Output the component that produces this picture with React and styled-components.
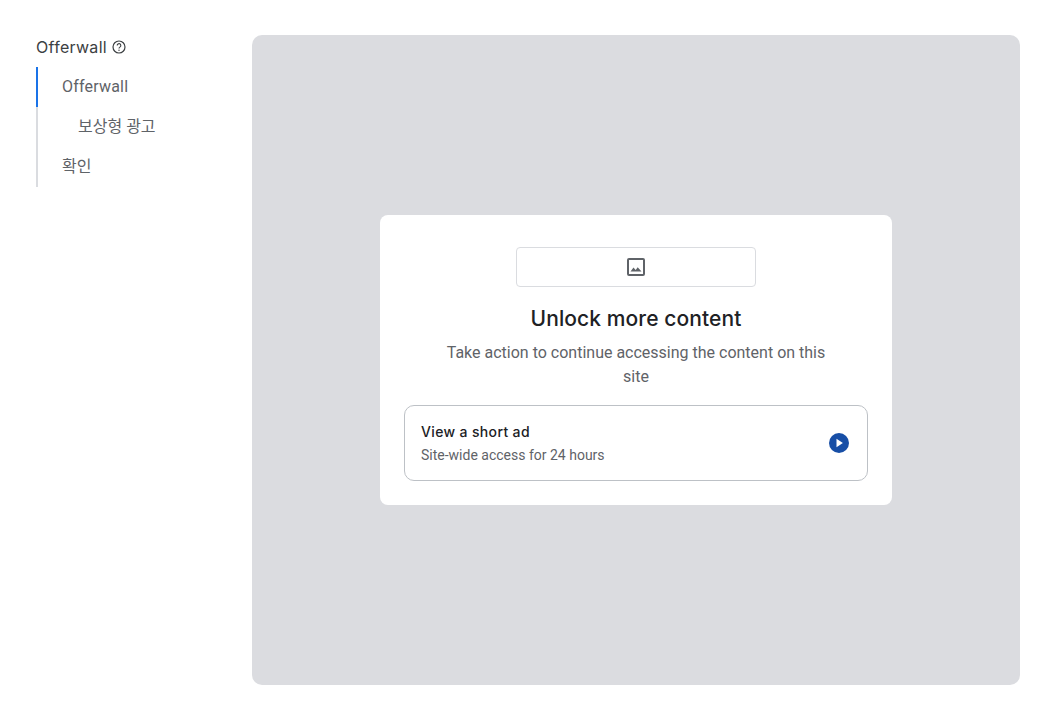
import React from "react";
import styled, { createGlobalStyle } from "styled-components";

const Global = createGlobalStyle`
  html, body { margin: 0; padding: 0; background: #fff; }
  body { font-family: Roboto, "Noto Sans CJK KR", sans-serif; overflow: hidden; }
`;
const Page = styled.div`
  display: flex;
  width: 1052px;
  height: 705px;
  box-sizing: border-box;
  padding: 35px 32px 20px 36px;
`;
const Sidebar = styled.aside`
  width: 216px;
  flex: none;
`;
const TitleRow = styled.div`
  display: flex;
  align-items: center;
  gap: 4px;
  height: 24px;
  margin-bottom: 8px;
`;
const Title = styled.span`
  font-family: "Inter", "Noto Sans CJK KR", sans-serif;
  font-size: 16px;
  letter-spacing: 0.3px;
  line-height: 24px;
  color: #3c4043;
`;
const Nav = styled.nav`
  display: flex;
  flex-direction: column;
  width: 180px;
`;
const NavItem = styled.div`
  height: 40px;
  box-sizing: border-box;
  display: flex;
  align-items: center;
  padding-left: ${(p) => (p.$sub ? 40 : 24)}px;
  padding-bottom: 1px;
  border-left: 2px solid ${(p) => (p.$active ? "#1a73e8" : "#dadce0")};
  font-size: 16px;
  letter-spacing: ${(p) => (p.$active ? 0.2 : 0)}px;
  line-height: 24px;
  color: #5f6368;
`;
const Panel = styled.main`
  flex: 1;
  height: 650px;
  background: #dbdce0;
  border-radius: 10px;
  display: flex;
  align-items: center;
  justify-content: center;
`;
const Card = styled.section`
  width: 512px;
  height: 290px;
  box-sizing: border-box;
  background: #fff;
  border-radius: 8px;
  padding: 32px 24px 24px;
  display: flex;
  flex-direction: column;
  align-items: center;
`;
const LogoBox = styled.div`
  width: 240px;
  height: 40px;
  box-sizing: border-box;
  border: 1px solid #dadce0;
  border-radius: 4px;
  display: flex;
  align-items: center;
  justify-content: center;
  color: #5f6368;
`;
const Heading = styled.h1`
  margin: 18px 0 0;
  height: 28px;
  font-family: "Inter", sans-serif;
  font-weight: 500;
  font-size: 21px;
  letter-spacing: 0.1px;
  line-height: 28px;
  color: #202124;
`;
const Desc = styled.p`
  margin: 8px 0 0;
  width: 400px;
  text-align: center;
  font-size: 16px;
  line-height: 24px;
  color: #5f6368;
`;
const Option = styled.div`
  margin-top: 16px;
  width: 464px;
  height: 76px;
  box-sizing: border-box;
  border: 1px solid #bdc1c6;
  border-radius: 10px;
  padding: 0 18px 0 16px;
  display: flex;
  align-items: center;
  justify-content: space-between;
`;
const OptionText = styled.div`
  display: flex;
  flex-direction: column;
  gap: 3px;
`;
const OptionTitle = styled.div`
  font-family: "Inter", sans-serif;
  font-weight: 500;
  font-size: 14px;
  letter-spacing: 0.35px;
  line-height: 20px;
  color: #202124;
`;
const OptionSub = styled.div`
  font-size: 14px;
  line-height: 20px;
  color: #5f6368;
`;

export default function App() {
  return (
    <Page>
      <Global />
      <Sidebar>
        <TitleRow>
          <Title>Offerwall</Title>
          <svg width="16" height="16" viewBox="0 0 16 16" fill="none" stroke="#3c4043">
            <circle cx="8" cy="8" r="6" strokeWidth="1.2" />
            <path d="M6.2 6.5a1.8 1.8 0 1 1 2.9 1.4c-.7.5-1.1.8-1.1 1.6" strokeWidth="1.1" />
            <circle cx="8" cy="11.2" r=".7" fill="#3c4043" stroke="none" />
          </svg>
        </TitleRow>
        <Nav>
          <NavItem $active>Offerwall</NavItem>
          <NavItem $sub>보상형 광고</NavItem>
          <NavItem>확인</NavItem>
        </Nav>
      </Sidebar>
      <Panel>
        <Card>
          <LogoBox>
            <svg width="24" height="24" viewBox="0 0 24 24" fill="#5f6368">
              <path d="M19 5v14H5V5h14m0-2H5a2 2 0 0 0-2 2v14a2 2 0 0 0 2 2h14a2 2 0 0 0 2-2V5a2 2 0 0 0-2-2z" />
              <path d="M6.5 16.5l3-4 2.2 2.6 2-2.9 3.8 4.3z" />
            </svg>
          </LogoBox>
          <Heading>Unlock more content</Heading>
          <Desc>Take action to continue accessing the content on this site</Desc>
          <Option>
            <OptionText>
              <OptionTitle>View a short ad</OptionTitle>
              <OptionSub>Site-wide access for 24 hours</OptionSub>
            </OptionText>
            <svg width="20" height="20" viewBox="0 0 20 20">
              <circle cx="10" cy="10" r="10" fill="#174ea6" />
              <path d="M7.5 5.8v8.4l6.4-4.2z" fill="#fff" />
            </svg>
          </Option>
        </Card>
      </Panel>
    </Page>
  );
}
